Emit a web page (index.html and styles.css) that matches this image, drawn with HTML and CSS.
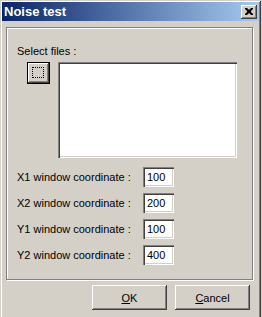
FILE: index.html
```html
<!DOCTYPE html>
<html>
<head>
<meta charset="utf-8">
<link rel="stylesheet" href="styles.css">
</head>
<body>
<div class="window">
  <div class="titlebar">
    <span class="title">Noise test</span>
    <div class="close">
      <svg width="8" height="7" viewBox="0 0 8 7"><path d="M0 0h2l2 2 2-2h2v1l-2 2 0 1 2 2v1h-2l-2-2-2 2h-2v-1l2-2 0-1-2-2z" fill="#000"/></svg>
    </div>
  </div>
  <div class="content">
    <div class="group">
      <div class="label">Select files :</div>
      <div class="files">
        <div class="browse"><div class="focus"></div></div>
        <div class="listbox"></div>
      </div>
      <div class="coords">
        <div class="lbl">X1 window coordinate :</div><div class="input">100</div>
        <div class="lbl">X2 window coordinate :</div><div class="input">200</div>
        <div class="lbl">Y1 window coordinate :</div><div class="input">100</div>
        <div class="lbl">Y2 window coordinate :</div><div class="input">400</div>
      </div>
    </div>
    <div class="footer">
      <div class="btn"><u>O</u>K</div>
      <div class="btn"><u>C</u>ancel</div>
    </div>
  </div>
</div>
</body>
</html>
```
FILE: styles.css
```css
html, body { margin: 0; padding: 0; overflow: hidden; background: #d4d0c8; }
body { font-family: "Liberation Sans", Arial, sans-serif; font-size: 11px; color: #000; }
.window {
  width: 261px; height: 324px; box-sizing: border-box; padding: 2px;
  background: #d4d0c8;
  box-shadow: inset 1px 1px #d4d0c8, inset -1px -1px #404040, inset 2px 2px #fff, inset -2px -2px #808080;
}
.titlebar {
  height: 19px; display: flex; align-items: center; justify-content: space-between;
  background: linear-gradient(to right, #0a246a, #a6caf0);
  padding: 0 2px 0 2px;
}
.title { color: #fff; font-weight: bold; font-size: 13px; }
.close {
  width: 16px; height: 14px; box-sizing: border-box; background: #d4d0c8;
  display: flex; align-items: center; justify-content: center;
  box-shadow: inset -1px -1px #404040, inset 1px 1px #fff, inset -2px -2px #808080, inset 2px 2px #d4d0c8;
}
.content { padding: 6px 6px 0 4px; }
.group {
  height: 253px; box-sizing: border-box;
  border: 1px solid #808080;
  box-shadow: inset 1px 1px #fff, 1px 1px #fff;
  padding: 17px 0 0 10px;
}
.label { line-height: 13px; }
.files { display: flex; gap: 8px; margin: 4px 0 0 10px; }
.browse {
  width: 23px; height: 22px; box-sizing: border-box;
  border: 1px solid #000; background: #d4d0c8;
  box-shadow: inset -1px -1px #404040, inset 1px 1px #fff, inset -2px -2px #808080;
  padding: 4px 5px 5px 4px;
}
.focus { width: 100%; height: 100%; box-sizing: border-box; border: 1px dotted #000; }
.listbox {
  width: 179px; height: 96px; box-sizing: border-box; background: #fff;
  box-shadow: inset 1px 1px #808080, inset 2px 2px #404040, inset -1px -1px #fff, inset -2px -2px #d4d0c8;
}
.coords {
  display: grid; grid-template-columns: 126px 31px; row-gap: 6px;
  margin-top: 9px; align-items: center;
}
.lbl { line-height: 13px; }
.input {
  height: 20px; box-sizing: border-box; background: #fff; padding: 0 0 0 4px;
  line-height: 20px;
  box-shadow: inset 1px 1px #808080, inset 2px 2px #404040, inset -1px -1px #fff, inset -2px -2px #d4d0c8;
}
.footer { display: flex; justify-content: flex-end; gap: 8px; margin-top: 5px; padding-right: 3px; }
.btn {
  width: 75px; height: 25px; box-sizing: border-box; display: flex; align-items: center; justify-content: center;
  box-shadow: inset -1px -1px #404040, inset 1px 1px #fff, inset -2px -2px #808080, inset 2px 2px #d4d0c8;
}
```
